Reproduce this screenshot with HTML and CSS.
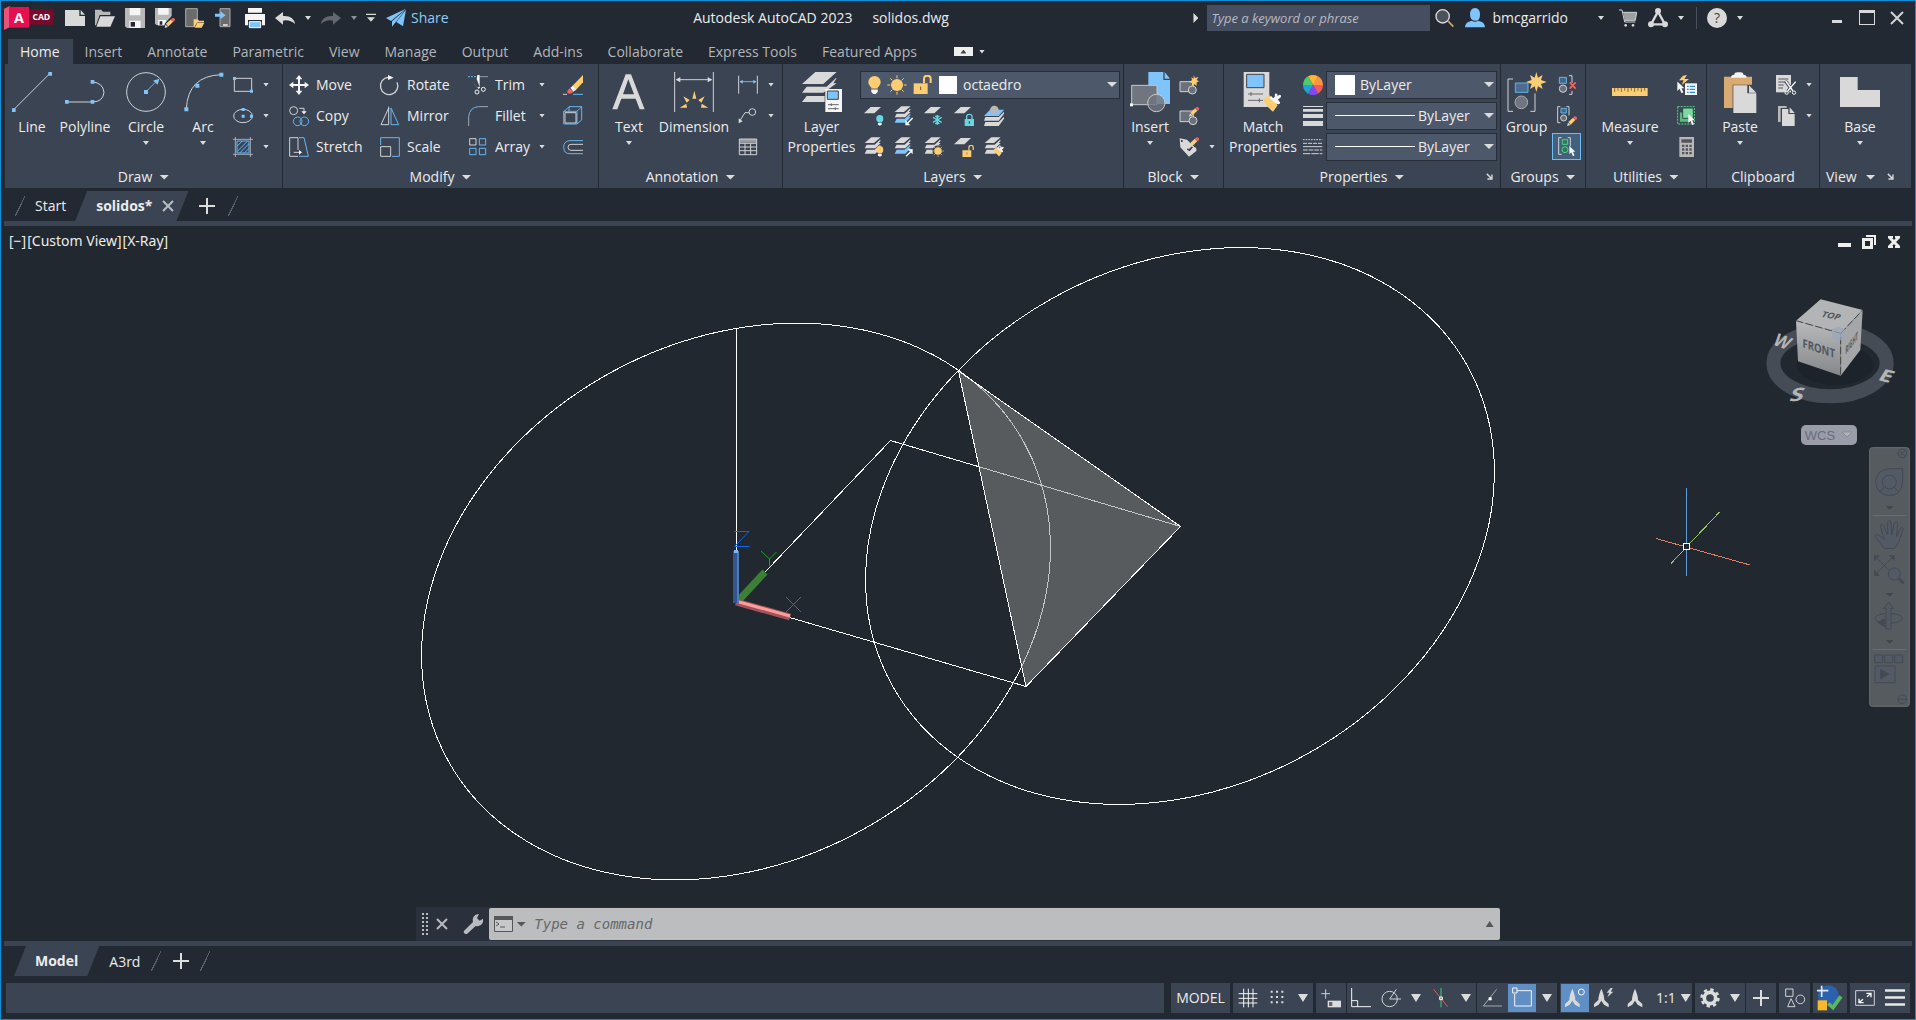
FILE: index.html
```html
<!DOCTYPE html>
<html lang="en">
<head>
<meta charset="utf-8">
<title>Autodesk AutoCAD 2023 - solidos.dwg</title>
<link rel="stylesheet" href="styles.css">
</head>
<body>
<svg class="defs" aria-hidden="true">
  <symbol id="sheet" viewBox="0 0 60 60"><path class="fw" d="M20 3h31L31 22H0z"/></symbol>
  <symbol id="stack" viewBox="0 0 60 60"><path class="fw" d="M22 1h28L30 18H2zM8 23h24l16-15 2 3-6 7h6L34 34H2zM8 38h24l16-14 2 3-6 7h6L34 50H2z"/></symbol>
  <symbol id="stackblue" viewBox="0 0 60 60"><path class="fw" d="M22 1h28L30 18H2zM8 23h24l16-15 2 3-6 7h6L34 34H2z"/><path class="fb" d="M8 38h24l16-14 2 3-6 7h6L34 50H2z"/></symbol>
  <symbol id="bulb" viewBox="0 0 40 60"><circle cx="20" cy="21" r="19"/><path d="M10 32h20v9H10z"/><path class="fW" d="M10 44h20v7l-6 7h-8l-6-7z"/></symbol>
  <symbol id="sun" viewBox="0 0 60 60"><circle class="fy" cx="30" cy="30" r="18"/><path class="sy" d="M30 1v9M30 50v9M1 30h9M50 30h9M10 10l6 6M44 44l6 6M10 50l6-6M44 16l6-6"/></symbol>
  <symbol id="lock" viewBox="0 0 60 60"><path d="M2 25h42v32H2z"/><path stroke="#6b5a35" d="M23 35v10"/><path class="open" d="M33 25V11q0-9 10-9t10 9v13"/></symbol>
  <symbol id="pencil" viewBox="0 0 30 30"><path class="fw" d="M0 30l3-10 7 7z"/><path class="fy" d="M4 18L18 5l7 7-14 14z"/><path class="fr" d="M20 3q4-4 8-1t1 8l-3 2-7-7z"/></symbol>
  <symbol id="brush" viewBox="0 0 60 60"><path class="fy" d="M1 22l18-15 26 31-14 19Q12 44 1 22z"/><path class="fW" d="M22 8l8-6 6 8 6-6q-2-12 4-10t4 8l8-4q8 2 2 10l-8 6 6 8q4 6-4 8l-8-2z" transform="translate(-1 8)scale(.9)"/></symbol>
  <symbol id="cursor" viewBox="0 0 30 40"><path class="fW" d="M1 0v30l7-7 6 14 6-3-6-13h9z"/></symbol>
  <symbol id="peak" viewBox="0 0 60 60"><path class="fw" d="M30 2q9 20 9 34l13 12v10L38 50l-8-12-8 12L8 58V48l13-12q0-14 9-34z"/></symbol>
  <symbol id="launch" viewBox="0 0 20 20"><path class="fw" d="M19 4v15H4v-4h8L1 4l3-3 11 11V4z"/></symbol>
</svg>

<div class="window">
<header class="titlebar">
  <button class="logo" aria-label="Application menu"><svg width="50" height="24" viewBox="0 0 150 72"><path fill="#e8527c" d="M0 8L18 0v63L0 72z"/><path fill="#e5104f" d="M15 3h60v62H15z"/><path fill="#780b2b" d="M75 10h74v46H75z"/><text x="45" y="51" font-size="43" font-weight="700" text-anchor="middle" fill="#fff">A</text><text x="112" y="42" font-size="26" font-weight="700" text-anchor="middle" fill="#fff">CAD</text></svg></button>
  <nav class="quick" aria-label="Quick access">
    <button aria-label="New"><svg class="i" viewBox="0 0 60 60"><path class="fw" d="M0 6h43v18h17v30H0zM47 6l13 14H47z"/></svg></button>
    <button aria-label="Open"><svg class="i" viewBox="0 0 60 60"><path class="fg" d="M0 5h18l6 6h22v10H14L3 52H0z"/><path class="fw" d="M16 25h44L46 56H4z"/></svg></button>
    <button aria-label="Save"><svg class="i" viewBox="0 0 60 60"><path class="fg" d="M0 0h60v60H6l-6-5z"/><path class="fW" d="M14 0h32v22H14zM13 38h34v22H13z"/><path fill="#222933" d="M17 42h13v14H17z"/></svg></button>
    <button aria-label="Save as"><svg class="i" viewBox="0 0 60 60"><path class="fg" d="M0 0h50v52H6l-6-5z"/><path class="fW" d="M9 0h32v20H9zM9 36h24v16H9z"/><path fill="#222933" d="M14 40h8v10h-8zM26 60l4-14 20-22 10 4v18L42 60z"/><use href="#pencil" x="28" y="29" width="32" height="31"/></svg></button>
    <button aria-label="Open from web"><svg class="i" viewBox="0 0 60 60"><path fill="#6b6b6b" stroke="#aaa" d="M2 2h35v54H2z"/><path class="fy" d="M26 34h12l4 4h15v5H36l-8 14h-2zM38 44h20l-8 15H30z"/></svg></button>
    <button aria-label="Save to mobile"><svg class="i" viewBox="0 0 60 60"><path fill="#6b6b6b" stroke="#aaa" d="M15 2h30v54H15z"/><path fill="#fff" d="M24 49h14v4H24z"/><path class="fb" d="M0 17h16V9l16 13-16 12v-8H0z"/></svg></button>
    <button aria-label="Plot"><svg class="i" viewBox="0 0 60 60"><path class="fW" d="M9 0h42v14H9zM0 18h60v34h-9V36H9v16H0z"/><path class="fb" stroke="#fff" d="M13 41h34v18H13z"/></svg></button>
    <button aria-label="Undo"><svg class="i" viewBox="0 0 60 60"><path class="fw" d="M0 30L24 12v12q32-2 36 24-16-14-36-10v12z"/></svg></button>
    <i class="caret"></i>
    <button aria-label="Redo"><svg class="i" viewBox="0 0 60 60"><path fill="#63676d" d="M60 30L36 12v12Q4 22 0 48q16-14 36-10v12z"/></svg></button>
    <i class="caret dim"></i>
    <button class="custom" aria-label="Customize"><svg width="10" height="20" viewBox="0 0 30 60"><path class="fw" d="M0 17h30v4H0zM3 28h24L15 41z"/></svg></button>
    <button class="share"><svg class="i" viewBox="0 0 60 60"><path class="fb" d="M60 2L0 30l15 9zM58 6L18 40v16l9-11zM60 5L31 42l20 13z"/></svg>Share</button>
  </nav>
  <h1 class="doc"><span>Autodesk AutoCAD 2023</span><span>solidos.dwg</span></h1>
  <i class="caret side"></i>
  <input class="search" type="search" placeholder="Type a keyword or phrase" aria-label="Search">
  <nav class="account" aria-label="Account">
    <button aria-label="Search"><svg class="i" viewBox="0 0 60 60"><path stroke="#d0a468" stroke-width="5" d="M40 40l15 16"/><circle cx="23" cy="25" r="20" fill="#4c515a" stroke="#ddd" stroke-width="4"/></svg></button>
    <button class="user"><svg class="i" viewBox="0 0 60 60"><path class="fb" d="M15 20q0-20 15-20t15 20-15 18-15-18zM0 58q0-16 20-20 10 6 20 0 20 4 20 20z"/></svg>bmcgarrido</button>
    <i class="caret"></i>
    <button class="cart" aria-label="App store"><svg class="i" viewBox="0 0 60 60"><path fill="#9c9fa3" d="M16 13h40l-4 24H20z"/><path class="sw" d="M3 6h9l8 36h32M15 13h41l-4 24H20"/><circle class="fw" cx="23" cy="52" r="4"/><circle class="fw" cx="45" cy="52" r="4"/></svg></button>
    <button aria-label="Autodesk App"><svg class="i" viewBox="0 0 60 60"><path stroke="#d9d9d9" stroke-width="7" fill="none" d="M30 11L9 49h42z"/><g class="fw"><circle cx="30" cy="9" r="9"/><circle cx="9" cy="49" r="9"/><circle cx="51" cy="49" r="9"/></g></svg></button>
    <i class="caret"></i>
    <span class="rule"></span>
    <button aria-label="Help"><svg class="i" viewBox="0 0 60 60"><circle class="fw" cx="30" cy="30" r="30"/><text x="30" y="45" font-size="42" text-anchor="middle" fill="#444">?</text></svg></button>
    <i class="caret"></i>
  </nav>
  <nav class="winbtns" aria-label="Window">
    <button aria-label="Minimize"><svg width="16" height="16"><path class="fw" d="M3 10h10v3H3z"/></svg></button>
    <button aria-label="Maximize"><svg width="16" height="16"><path class="fw" fill-rule="evenodd" d="M0 0h16v15H0zM1 3v11h14V3z"/></svg></button>
    <button aria-label="Close"><svg width="16" height="16"><path class="sw" stroke-width="2" d="M2 2l12 12M14 2L2 14"/></svg></button>
  </nav>
</header>

<nav class="tabs" aria-label="Ribbon tabs">
  <a href="#home" class="on">Home</a><a href="#insert">Insert</a><a href="#annotate">Annotate</a><a href="#parametric">Parametric</a><a href="#view">View</a><a href="#manage">Manage</a><a href="#output">Output</a><a href="#addins">Add-ins</a><a href="#collaborate">Collaborate</a><a href="#express">Express Tools</a><a href="#apps">Featured Apps</a>
  <button class="collapse" aria-label="Minimize ribbon"><i></i></button><i class="caret"></i>
</nav>

<main class="ribbon" id="home">
  <section class="panel draw">
    <div class="body">
      <button class="big"><svg class="I" viewBox="0 0 120 120"><path class="sw" d="M4 114L114 4"/><path class="fb" d="M0 109h11v11H0zM109 0h11v11h-11z"/></svg>Line</button>
      <button class="big"><svg class="I" viewBox="0 0 120 120"><path class="sw" d="M5 90h77q32 0 35-29-3-29-35-31"/><path class="fb" d="M0 84h11v11H0zM77 84h11v11H77zM77 24h11v11H77z"/></svg>Polyline</button>
      <button class="big"><svg class="I" viewBox="0 0 120 120"><circle class="sw" cx="60" cy="60" r="58"/><path class="sb" d="M60 59l28-28"/><path class="fb" d="M54 54h12v12H54zM100 20l-5 18-14-12z"/></svg>Circle<i class="caret"></i></button>
      <button class="big"><svg class="I" viewBox="0 0 120 120"><path class="sw" d="M10 112Q14 12 114 8"/><path class="fb" d="M4 106h12v12H4zM37 35h12v12H37zM109 2h12v12h-12z"/></svg>Arc<i class="caret"></i></button>
      <div class="smalls">
        <button aria-label="Rectangle"><svg class="i" viewBox="0 0 60 60"><path class="sw" d="M4 10h52v39H4z"/><path class="fb" d="M0 6h9v9H0zM51 44h9v9h-9z"/></svg><i class="caret"></i></button>
        <button aria-label="Ellipse"><svg class="i" viewBox="0 0 60 60"><ellipse class="sw" cx="30" cy="30" rx="28" ry="20"/><path class="fb" d="M26 6h9v9h-9zM26 26h9v9h-9zM51 26h9v9h-9z"/></svg><i class="caret"></i></button>
        <button aria-label="Hatch"><svg class="i" viewBox="0 0 60 60"><path class="sw" opacity=".7" d="M7 0v60M52 0v60M0 7h60M0 52h60"/><path class="sb" d="M12 12h36v36H12zM12 28l16-16M12 44l32-32M20 48l28-28M34 48l14-14"/></svg><i class="caret"></i></button>
      </div>
    </div>
    <h2>Draw<i class="caret l"></i></h2>
  </section>

  <section class="panel modify">
    <div class="body">
      <div class="smalls">
        <button><svg class="i" viewBox="0 0 60 60"><path class="fW" d="M30 0l10 13h-7v14h14v-7l13 10-13 10v-7H33v14h7L30 60 20 47h7V33H13v7L0 30l13-10v7h14V13h-7z"/></svg>Move</button>
        <button><svg class="i" viewBox="0 0 60 60"><circle class="sw" cx="14" cy="14" r="12"/><path class="sw" d="M31 7h14v12"/><path class="fW" d="M37 16h16l-8 9z"/><circle class="sb" cx="26" cy="46" r="13"/><circle class="sb" cx="46" cy="46" r="13"/></svg>Copy</button>
        <button><svg class="i" viewBox="0 0 60 60"><path class="sw" d="M27 58H2V2h25v37M14 46h20"/><path class="fW" d="M30 39l9 7-9 7z"/><path class="sb" d="M30 2h15l13 56H30"/></svg>Stretch</button>
      </div>
      <div class="smalls">
        <button><svg class="i" viewBox="0 0 60 60"><path class="sw" d="M24 7A26 26 0 1 0 51 22" stroke-width="4"/><path class="fW" d="M24 0v15l17-7z"/></svg>Rotate</button>
        <button><svg class="i" viewBox="0 0 60 60"><path class="sw" d="M26 6v50H3zM26 2v8"/><path class="sb" d="M33 6v50h23z"/></svg>Mirror</button>
        <button><svg class="i" viewBox="0 0 60 60"><path class="sb" d="M2 24V2h56v56H36"/><path class="sw" d="M2 29h30v29H2z"/></svg>Scale</button>
      </div>
      <div class="smalls">
        <button class="wide"><svg class="i" viewBox="0 0 60 60"><path class="sb" stroke-dasharray="6 3" d="M0 5h28"/><path class="sw" opacity=".6" d="M36 5h24"/><path class="fW" d="M5 12l27 30 4-4L26 12 28 0h7v34l-7 4z"/><circle class="sW" cx="27" cy="51" r="6"/><circle class="sW" cx="46" cy="43" r="6"/></svg>Trim<i class="caret"></i></button>
        <button class="wide"><svg class="i" viewBox="0 0 60 60"><path class="sb" d="M32 2Q5 3 2 32"/><path class="sw" opacity=".7" d="M33 2h27M2 32v28"/></svg>Fillet<i class="caret"></i></button>
        <button class="wide"><svg class="i" viewBox="0 0 60 60"><path class="sw" d="M5 5h19v19H5z"/><path class="sb" d="M34 5h19v19H34zM34 34h19v19H34zM5 34h19v19H5z"/></svg>Array<i class="caret"></i></button>
      </div>
      <div class="smalls">
        <button aria-label="Erase"><svg class="i" viewBox="0 0 60 60"><path class="sw" d="M0 58h12"/><path class="sb" d="M30 58h30"/><path class="fy" d="M28 33L60 0v22L38 46z"/><path class="fW" d="M22 38l8-6 9 12-8 6z"/><path class="fr" d="M20 40l11 11q-9 8-16 4t5-15z"/></svg></button>
        <button aria-label="Explode"><svg class="i" viewBox="0 0 60 60"><path class="sb" d="M2 18L18 2h38v40L42 54M18 2v14M56 2L42 16M2 16h40v38H2z"/><path class="sw" d="M6 20h33v31H6z"/></svg></button>
        <button aria-label="Offset"><svg class="i" viewBox="0 0 60 60"><path class="sb" d="M60 11H21Q2 12 2 31t19 19h39"/><path class="sw" d="M60 22H24q-9 0-9 9t9 9h36"/></svg></button>
      </div>
    </div>
    <h2>Modify<i class="caret l"></i></h2>
  </section>

  <section class="panel annotation">
    <div class="body">
      <button class="big"><svg class="I" viewBox="0 0 120 120"><path class="fw" fill-rule="evenodd" d="M10 112L50 7h16l41 105H92L80 80H37l-12 32zM42 67h33L58 22z"/></svg>Text<i class="caret"></i></button>
      <button class="big"><svg class="I" viewBox="0 0 120 120"><path class="sw" d="M2 0v120M118 0v120M8 23h104"/><path class="fw" d="M5 23l14-8v16zM115 23l-14-8v16z"/><path class="fy" d="M55 80l6-24 6 24zM28 73l19 11-9 8zM92 73L73 84l9 8zM17 107l20-12 2 12zM103 107L83 95l-2 12z"/></svg>Dimension</button>
      <div class="smalls">
        <button aria-label="Linear"><svg class="i" viewBox="0 0 60 60"><path class="sw" d="M2 2v54M58 2v54"/><path class="sb" d="M6 20h48"/><path class="fb" d="M5 20l9-6v12zM55 20l-9-6v12z"/></svg><i class="caret"></i></button>
        <button aria-label="Leader"><svg class="i" viewBox="0 0 60 60"><circle class="sw" cx="43" cy="18" r="10"/><path class="sw" d="M33 20H21L7 42"/><path class="fw" d="M2 52V37l12 9z"/></svg><i class="caret"></i></button>
        <button aria-label="Table"><svg class="i" viewBox="0 0 60 60"><path class="fw" opacity=".6" d="M4 6h52v11H4z"/><path class="sw" d="M4 6h52v47H4zM4 19h52M4 30h52M4 41h52M21 19v34M38 19v34"/></svg></button>
      </div>
    </div>
    <h2>Annotation<i class="caret l"></i></h2>
  </section>

  <section class="panel layers">
    <div class="body">
      <button class="big"><svg class="I" viewBox="0 0 120 120"><path class="fw" d="M40 0h64L64 36H0zM14 44h60l28-26h2L94 34h10L64 62H0zM14 72h54V90H0z"/><path class="fW" d="M70 51h50v69H70z"/><path class="fb" stroke="#444" d="M76 57h33v25H76z"/><path stroke="#666" d="M78 98h32M78 110h32M88 94v8M100 106v8"/></svg>Layer<br>Properties</button>
      <div class="stackcol">
        <label class="field"><svg class="fy" width="13" height="20" viewBox="0 0 40 60"><use href="#bulb"/></svg><svg class="i" viewBox="0 0 60 60"><use href="#sun"/></svg><svg class="i fy lockopen" viewBox="0 0 60 60"><use href="#lock"/></svg><span class="swatch"></span><select aria-label="Layer"><option>octaedro</option></select><i class="caret l"></i></label>
        <div class="iconrow">
          <button aria-label="Off"><svg class="i" viewBox="0 0 60 60"><use href="#sheet"/><svg class="ft" x="34" y="26" width="27" height="34" viewBox="0 0 40 60"><use href="#bulb"/></svg></svg></button>
          <button aria-label="Isolate"><svg class="i" viewBox="0 0 60 60"><use href="#stackblue"/><path stroke="#fff" stroke-width="4" d="M56 36L42 50"/><path class="fW" d="M34 58V42l15 16z"/></svg></button>
          <button aria-label="Freeze"><svg class="i" viewBox="0 0 60 60"><use href="#sheet"/><path stroke="#67d6e0" stroke-width="4" d="M40 27v29M27 34l26 15M27 49l26-15M34 29l6 6 6-6M34 54l6-6 6 6"/></svg></button>
          <button aria-label="Lock"><svg class="i" viewBox="0 0 60 60"><use href="#sheet"/><path class="ft" d="M32 39h28v21H32z"/><path stroke="#67d6e0" stroke-width="4" d="M38 39v-8q0-6 8-6t8 6v8"/><path stroke="#333" d="M46 46v7"/></svg></button>
          <button aria-label="Make current"><svg class="i" viewBox="0 0 60 60"><path class="fb" d="M18 11h42L44 30H0z"/><circle class="fg" cx="31" cy="12" r="13"/><path class="fw" d="M4 33h40l16-16v6L44 44H0zM4 48h40l16-16v6L44 60H0z"/></svg></button>
        </div>
        <div class="iconrow">
          <button aria-label="On"><svg class="i" viewBox="0 0 60 60"><use href="#stack"/><svg class="fy" x="34" y="26" width="27" height="34" viewBox="0 0 40 60"><use href="#bulb"/></svg></svg></button>
          <button aria-label="Unisolate"><svg class="i" viewBox="0 0 60 60"><use href="#stackblue"/><path stroke="#fff" stroke-width="4" d="M36 58l14-14"/><path class="fW" d="M56 36v16L41 37z"/></svg></button>
          <button aria-label="Thaw"><svg class="i" viewBox="0 0 60 60"><use href="#stack"/><circle cx="42" cy="42" r="17" fill="#3b4453"/><use href="#sun" x="23" y="23" width="38" height="38"/></svg></button>
          <button aria-label="Unlock"><svg class="i" viewBox="0 0 60 60"><use href="#sheet"/><svg class="fy lockopen" x="24" y="24" width="38" height="38" viewBox="0 0 60 60"><use href="#lock"/></svg></svg></button>
          <button aria-label="Match layer"><svg class="i" viewBox="0 0 60 60"><use href="#stack"/><use href="#brush" x="28" y="26" width="34" height="34"/></svg></button>
        </div>
      </div>
    </div>
    <h2>Layers<i class="caret l"></i></h2>
  </section>

  <section class="panel block">
    <div class="body">
      <button class="big"><svg class="I" viewBox="0 0 120 120"><path class="fb" d="M55 0h45v24h20v72H55zM104 0l16 20h-16z"/><path fill="#70767f" stroke="#c8c8c8" d="M5 40h76v58H5z"/><path class="fW" d="M0 94h9v9H0z"/><circle cx="79" cy="93" r="26" fill="#70767fcc" stroke="#c8c8c8"/></svg>Insert<i class="caret"></i></button>
      <div class="smalls">
        <button aria-label="Create"><svg class="i" viewBox="0 0 60 60"><path class="fg2 sw" d="M3 20h40v30H3z"/><circle class="fg2 sw" cx="40" cy="45" r="12"/><path class="fy" d="M44 0l4 9 10-3-5 9 7 4-8 4 2 9-8-4-7 5v-9l-9-4 9-4-2-9 7 4z"/></svg></button>
        <button aria-label="Edit"><svg class="i" viewBox="0 0 60 60"><path class="fg2 sw" d="M3 15h40v32H3z"/><circle class="fg2 sw" cx="42" cy="44" r="12"/><use href="#pencil" x="30" y="2" width="30" height="30"/></svg></button>
        <button aria-label="Edit attributes"><svg class="i" viewBox="0 0 60 60"><path class="fw" d="M2 4l22 4 22 22q8 2 6 12L30 59 4 31z"/><path fill="#3b4453" d="M6 9h5v6H6zM26 34l4 2 8-8 4 3-10 12-8-5z"/><use href="#pencil" x="28" y="0" width="32" height="32"/></svg><i class="caret"></i></button>
      </div>
    </div>
    <h2>Block<i class="caret l"></i></h2>
  </section>

  <section class="panel props">
    <div class="body">
      <button class="big"><svg class="I" viewBox="0 0 120 120"><path class="fw" d="M2 0h77v105H2z"/><path class="fb" stroke="#444" d="M11 7h52v40H11z"/><path stroke="#666" d="M15 66h45M15 85h45M24 60v12M49 79v12"/><use href="#brush" x="58" y="62" width="62" height="60"/></svg>Match<br>Properties</button>
      <div class="smalls">
        <button aria-label="Color"><svg class="i" viewBox="-30 -30 60 60"><path fill="#ff6b4a" d="M0 0V-30H0L26-15z"/><path fill="#fcb731" d="M0 0L-15-26Q0-34 15-26z"/><path fill="#ff9340" d="M0 0L15-26Q29-18 30 0z"/><path fill="#f25c5c" d="M0 0H30Q29 18 15 26z"/><path fill="#8347f5" d="M0 0L15 26Q0 34-15 26z"/><path fill="#1fa4d8" d="M0 0L-15 26Q-29 18-30 0z"/><path fill="#4ecb71" d="M0 0H-30Q-29-18-15-26z"/></svg></button>
        <button aria-label="Lineweight"><svg class="i" viewBox="0 0 60 60"><path class="fw" d="M0 0h60v3H0zM0 9h60v8H0zM0 24h60v12H0zM0 45h60v15H0z"/></svg></button>
        <button aria-label="Linetype"><svg class="i" viewBox="0 0 60 60"><g class="sw"><path stroke-dasharray="5 3" d="M0 8h58"/><path stroke-dasharray="12 3" d="M0 19h58"/><path d="M0 29h58"/><path stroke-dasharray="14 3" d="M0 39h58"/><path stroke-dasharray="22 3" d="M0 50h58"/></g></svg></button>
      </div>
      <div class="stackcol">
        <label class="field color"><span class="swatch"></span><select aria-label="Object color"><option>ByLayer</option></select><i class="caret l"></i></label>
        <label class="field"><span class="line"></span><select aria-label="Lineweight"><option>ByLayer</option></select><i class="caret l"></i></label>
        <label class="field"><span class="line"></span><select aria-label="Linetype"><option>ByLayer</option></select><i class="caret l"></i></label>
      </div>
    </div>
    <h2>Properties<i class="caret l"></i><svg class="launcher" width="7" height="7"><use href="#launch"/></svg></h2>
  </section>

  <section class="panel groups">
    <div class="body">
      <button class="big"><svg class="I" viewBox="0 0 120 120"><path class="sw" d="M18 21H3v97h15M70 118h14V64"/><path fill="#4c6d92" stroke="#62b0ea" d="M25 33h38v28H25z"/><circle cx="43" cy="91" r="19" fill="#70767f" stroke="#aaa"/><path class="fy" d="M88 0l5 17 14-8-5 15 17 6-17 6 5 15-14-8-5 17-5-17-14 8 5-15-17-6 17-6-5-15 14 8z"/></svg>Group</button>
      <div class="smalls">
        <button aria-label="Ungroup"><svg class="i" viewBox="0 0 60 60"><path class="sb fbd" d="M7 7h21v18H7z"/><circle class="fg2 sw" cx="18" cy="41" r="11"/><path class="sw" d="M36 2h9v22M45 48v10h-9"/><path stroke="#f26363" stroke-width="5" d="M38 22l18 19M56 22L38 41"/></svg></button>
        <button aria-label="Group edit"><svg class="i" viewBox="0 0 60 60"><path class="sw" d="M10 2H2v48h8M28 2h8v26"/><path class="sb fbd" d="M12 7h16v14H12z"/><circle class="fg2 sw" cx="20" cy="36" r="9"/><use href="#pencil" x="30" y="30" width="30" height="30"/></svg></button>
        <button class="active" aria-label="Group selection"><svg class="i" viewBox="0 0 60 60"><path class="sw" d="M14 2H5v50h9M32 2h8v26"/><path fill="#2f7a56" stroke="#52d087" d="M16 8h16v14H16z"/><circle cx="24" cy="38" r="9" fill="#2f7a56" stroke="#52d087"/><use href="#cursor" x="36" y="27" width="25" height="33"/></svg></button>
      </div>
    </div>
    <h2>Groups<i class="caret l"></i></h2>
  </section>

  <section class="panel utils">
    <div class="body">
      <button class="big"><svg class="I" viewBox="0 0 120 120"><path class="fy" d="M6 48h107v24H6z"/><path stroke="#8a6b32" d="M14 48v12M24 48v8M34 48v12M44 48v8M54 48v12M64 48v8M74 48v12M84 48v8M94 48v12M104 48v8"/></svg>Measure<i class="caret"></i></button>
      <div class="smalls">
        <button aria-label="Quick select"><svg class="i" viewBox="0 0 60 60"><path class="fy" d="M18 2L6 16h14l-6 14 22-18H22l8-12z"/><path class="fW" d="M24 25h36v35H24z"/><path stroke="#2b8fdc" stroke-width="4" d="M30 34h5M38 34h16M30 43h5M38 43h16M30 52h5M38 52h16"/><use href="#cursor" x="0" y="17" width="29" height="43"/></svg></button>
        <button aria-label="Select all"><svg class="i" viewBox="0 0 60 60"><path stroke="#59cf8d" stroke-dasharray="6 3" d="M2 2h50v52H2z"/><path fill="#57bd81" stroke="#2e4a47" d="M7 18h32v31H7z"/><path fill="#7bd9a2" stroke="#2e4a47" d="M17 6h32v31H17z"/><use href="#cursor" x="33" y="24" width="27" height="36"/></svg></button>
        <button aria-label="Calculator"><svg class="i" viewBox="0 0 60 60"><path class="fg" d="M7 0h44v60H7z"/><path fill="#555" d="M13 7h32v10H13zM15 23h7v7h-7zM26 23h7v7h-7zM37 23h7v7h-7zM15 34h7v7h-7zM26 34h7v7h-7zM37 34h7v7h-7zM15 45h7v7h-7zM26 45h7v7h-7zM37 45h7v7h-7z"/></svg></button>
      </div>
    </div>
    <h2>Utilities<i class="caret l"></i></h2>
  </section>

  <section class="panel clip">
    <div class="body">
      <button class="big"><svg class="I" viewBox="0 0 120 120"><path fill="#d9ab73" d="M12 14h84v24H38v70H12z"/><path class="fW" d="M33 17q0-9 10-9 0-7 10-7h8q9 0 9 7 10 0 10 9z"/><path class="fw" d="M40 40h42v24h27v59H40zM87 40l22 22H87z"/></svg>Paste<i class="caret"></i></button>
      <div class="smalls">
        <button aria-label="Cut"><svg class="i" viewBox="0 0 60 60"><path class="fw" d="M0 0h45v52H0z"/><path stroke="#555" d="M7 12h30M7 21h30M7 30h16M7 39h14"/><path stroke="#3b4453" stroke-width="9" d="M28 18l24 32M58 18L34 50"/><path stroke="#fff" stroke-width="4" d="M29 18l22 30M59 20L35 48"/><circle class="sW" cx="32" cy="53" r="5"/><circle class="sW" cx="54" cy="53" r="5"/></svg><i class="caret"></i></button>
        <button aria-label="Copy clip"><svg class="i" viewBox="0 0 60 60"><path class="fg" d="M6 0h26v6H14v42H6z"/><path class="fw" d="M18 9h19v15h19v36H18zM41 4l15 17H41z"/></svg><i class="caret"></i></button>
      </div>
    </div>
    <h2>Clipboard</h2>
  </section>

  <section class="panel viewp">
    <div class="body">
      <button class="big"><svg class="I" viewBox="0 0 120 120"><path class="fw" d="M0 15h53v39h67v51H0z"/></svg>Base<i class="caret"></i></button>
    </div>
    <h2>View<i class="caret l"></i><svg class="launcher" width="7" height="7"><use href="#launch"/></svg></h2>
  </section>
</main>

<nav class="filetabs" aria-label="Files">
  <span class="slash"></span><a href="#start" class="ft-start">Start</a>
  <a href="#solidos" class="slant file">solidos*<svg width="12" height="12"><path stroke="#b9bcc2" stroke-width="2" d="M1 1l10 10M11 1L1 11"/></svg></a>
  <button class="plus" aria-label="New drawing"></button><span class="slash"></span>
</nav>

<section class="viewport" aria-label="Drawing area">
  <svg class="drawing" viewBox="1 226 1914 715" preserveAspectRatio="xMidYMid meet">
    <g stroke="#fff" stroke-width="1" fill="none" shape-rendering="crispEdges">
      <ellipse rx="329" ry="261" transform="translate(736 601.5)rotate(-28.9)"/>
      <ellipse rx="329" ry="261" transform="translate(1180 526)rotate(-28.9)"/>
      <path d="M736.5 602V328.500M736.5 602L890.500 440.500 1180.500 526.500M736.5 602L1026 686.500"/>
      <path d="M958.500 371L1180.500 526.500 1026 686.500z" fill="#8d8e8b" fill-opacity=".5"/>
    </g>
    <g fill="none" stroke-linecap="butt">
      <path stroke="#3c8038" stroke-width="7" d="M739 600L765 572"/>
      <path stroke="#a35257" stroke-width="7" d="M736 602L790 617"/><path stroke="#fb9d9d" stroke-width="3" d="M739 602L790 616"/>
      <path stroke="#34578b" stroke-width="6" d="M736 603V551"/><path stroke="#4f7dbb" stroke-width="2" d="M738 603V551"/><path stroke="#7db6fa" stroke-width="4" d="M736 553v-3"/>
      <path stroke="#0b65f2" d="M734 531.500h15L734.500 546.500h15"/>
      <path stroke="#17a617" d="M761 551l8.500 8 7-7M769.500 559v7"/>
      <path stroke="#e32f2f" d="M786 597l15 15M801 597l-15 15"/>
    </g>
    <g fill="none" shape-rendering="crispEdges">
      <path stroke="#5b9ddc" stroke-width="1" d="M1686.500 488v88"/>
      <path stroke="#98c462" d="M1671 563.500L1719.500 512"/>
      <path stroke="#dd7f62" d="M1656 538.500L1750 565"/>
      <path stroke="#fff" fill="#222830" d="M1683.500 543.500h6v6h-6z"/>
    </g>
  </svg>
  <button class="vplabel"><span>[−]</span><span>[Custom View]</span><span>[X-Ray]</span></button>
  <div class="vpbtns">
    <button aria-label="Minimize viewport"><svg width="16" height="16"><path fill="#eee" d="M2 9h13v4H2z"/></svg></button>
    <button aria-label="Restore viewport"><svg width="16" height="16"><path fill="#eee" fill-rule="evenodd" d="M5 1h10v10h-2V3H5zM1 4h11v11H1zM4 7v5h5V7z"/></svg></button>
    <button aria-label="Close viewport"><svg width="16" height="16"><path stroke="#eee" stroke-width="3" d="M3 3l10 10M13 3L3 13"/><path fill="#eee" d="M2 2h5v2H2zM9 2h5v2H9zM2 12h5v2H2zM9 12h5v2H9z"/></svg></button>
  </div>
  <svg class="cube" width="132" height="110" viewBox="72 48 396 330">
    <defs><linearGradient id="front" x2="0" y2="1"><stop stop-color="#b8babc"/><stop offset="1" stop-color="#858789"/></linearGradient></defs>
    <ellipse cx="270" cy="250" rx="170" ry="99" fill="none" stroke="#454c55" stroke-width="42"/>
    <ellipse cx="285" cy="255" rx="115" ry="60" fill="#1b2027" opacity=".6"/>
    <path fill="#b2b4b6" d="M168 122L242 58l126 32-66 70z"/>
    <path fill="url(#front)" d="M168 122l134 38v127l-128-43z"/>
    <path fill="#a4a6a8" d="M302 160l66-70-7 120-59 77z"/>
    <path stroke="#444" stroke-dasharray="22 8" d="M168 122l134 38v127M302 160l66-70"/>
    <path fill="#9aa7b8" opacity=".7" d="M276 148l18-8 20 6v30l-18 8-20-8z"/>
    <g font-weight="700" text-anchor="middle" fill="#51565c">
      <text font-size="28" transform="matrix(.97 .2 -.5 .8 269 115)">TOP</text>
      <text font-size="36" transform="matrix(.8 .26 0 1 236 218)">FRONT</text>
      <text font-size="32" transform="matrix(.38 -.48 0 1 335 200)">RIGHT</text>
    </g>
    <g font-weight="700" text-anchor="middle" fill="#b5b5b5" font-size="58">
      <text transform="matrix(.8 .3 -.5 .8 118 201)">W</text><text transform="matrix(1.300 -.1 -.3 .95 166 363)">S</text><text transform="matrix(1.200 .3 -.5 .8 430 304)">E</text>
    </g>
  </svg>
  <button class="wcs">WCS<svg width="12" height="8"><path fill="#b0b2bd" stroke="#8c8c97" stroke-width="1" d="M1 1h10L6 6z"/></svg></button>
  <svg class="navbar" width="41" height="260" viewBox="386 500 123 780" fill="none" stroke="#444a53" stroke-width="4">
    <rect x="388" y="502" width="119" height="776" rx="8" fill="#565b5f" stroke="#6a6f73"/>
    <circle cx="486" cy="519" r="13"/><path d="M479 512l14 14M493 512l-14 14"/>
    <path fill="#525a66" d="M447 565h40v40q-3 40-40 41-38-3-41-41 3-38 41-40z"/><circle cx="447" cy="605" r="21"/><path d="M432 621l-14 14M462 621l14 14"/>
    <path stroke="#6a7074" stroke-width="3" d="M397 706h100M397 1108h100"/>
    <path stroke="none" fill="#3f454d" d="M437 677h22l-11 11zM437 938h22l-11 11zM437 1079h22l-11 11z"/>
    <path fill="#525a66" d="M432 804l-28-36q2-10 14-2l14 12-12-40q2-12 10-2l12 28V724q4-8 10 0l2 40 8-36q6-8 10 2l-4 40 12-26q8-6 8 4l-14 40-12 16z"/>
    <path d="M404 828l56 55M460 828l-56 55"/><path stroke="none" fill="#444a53" d="M401 825h18l-18 18zM463 825v18l-18-18zM401 886v-18l18 18z"/>
    <circle cx="462" cy="881" r="18" fill="#525a66"/><path stroke-width="9" d="M475 895l15 14"/>
    <ellipse cx="445" cy="1014" rx="41" ry="15"/><path fill="#525a66" d="M437 1046V984h-8l16-18 14 18h-7v62z"/><path fill="#444a53" d="M413 1027l20-12v24z"/>
    <path fill="#525a66" d="M403 1124h24v23h-24zM433 1124h24v23h-24zM463 1124h24v23h-24zM404 1157h60v50h-60z"/><path fill="#444a53" d="M421 1168l24 13-24 14z"/>
    <circle cx="486" cy="1257" r="13"/><path d="M475 1257h22"/>
  </svg>
  <form class="cmd">
    <svg width="6" height="22"><path stroke="#b9bbc0" stroke-width="2" stroke-dasharray="2 2" d="M1 0v22M5 0v22"/></svg>
    <button type="button" aria-label="Close command line"><svg width="12" height="12"><path stroke="#b9bbc0" stroke-width="2" d="M1 1l10 10M11 1L1 11"/></svg></button>
    <button type="button" aria-label="Customize command line"><svg class="i" viewBox="0 0 60 60"><path fill="#b9bbc0" d="M2 52l28-28q-4-14 8-22l10-2-6 12 8 8 10-6q2 14-8 20-8 4-14 2L12 60Q2 62 2 52z"/></svg></button>
    <label class="entry"><svg width="20" height="16"><path stroke="#55575a" fill="#c6c8c9" stroke-width="1" d="M.5.5h18v15H.5z"/><path fill="#55575a" d="M0 0h19v4H0z"/><path stroke="#55575a" stroke-width="1" d="M2 6l3 2-3 2M6 11h5"/></svg><i class="caret l"></i><input type="text" placeholder="Type a command" aria-label="Command"><i class="caret up"></i></label>
  </form>
</section>

<nav class="layouts" aria-label="Layouts">
  <a href="#model" class="slant model">Model</a><a href="#a3rd">A3rd</a><span class="slash"></span><button class="plus" aria-label="New layout"></button><span class="slash"></span>
</nav>

<footer class="status">
  <div class="fill"></div>
  <div class="cell w59"><button class="mode">MODEL</button></div>
  <div class="cell w80"><button aria-label="Grid"><svg class="i" viewBox="0 0 60 60"><path class="sW" d="M17 2v56M31 2v56M45 2v56M2 17h56M2 31h56M2 45h56"/></svg></button><button aria-label="Snap"><svg class="i" viewBox="0 0 60 60"><path stroke="#ddd" stroke-width="6" stroke-dasharray="6 10" d="M8 11h40M8 27h40M8 43h40"/></svg></button><i class="caret m"></i></div>
  <div class="cell w30"><button aria-label="Dynamic input"><svg class="i" viewBox="0 0 60 60"><path class="sw" d="M14 4v28M1 17h26"/><path fill="#ddd" d="M20 38h40v20H20z"/><path fill="#666" d="M24 42h10v12H24z"/></svg></button></div>
  <div class="cell w130"><button aria-label="Ortho"><svg class="i" viewBox="0 0 60 60"><path class="sW" d="M2 0v56h58M2 38h18v18"/></svg></button><button aria-label="Polar"><svg class="i" viewBox="0 0 60 60"><circle class="sw" cx="26" cy="33" r="23"/><path class="sw" d="M26 33h34M26 33L46 4"/></svg></button><i class="caret m"></i><button aria-label="Isodraft"><svg class="i" viewBox="0 0 60 60"><path stroke="#4bc47d" d="M30 0v58"/><path stroke="#d85c63" d="M8 4l42 52"/><path stroke="#fff" d="M26 27h8v8h-8z"/></svg></button><i class="caret m"></i></div>
  <div class="cell w80 tight"><button aria-label="Tracking"><svg class="i" viewBox="0 0 60 60"><path class="sw" opacity=".7" d="M44 4L4 54h56"/><path fill="#fff" d="M20 28h9v9h-9z"/></svg></button><button class="lit" aria-label="Object snap"><svg class="i" viewBox="0 0 60 60"><path class="sW" d="M14 8h44v46H8V18M2 0h13v15H2z"/></svg></button><i class="caret m"></i></div>
  <div class="cell w132"><button class="lit" aria-label="Annotation visibility"><svg class="i" viewBox="0 0 60 60"><use href="#peak" x="-8" width="60" height="60"/><circle class="sW" cx="49" cy="12" r="9"/></svg></button><button aria-label="Auto scale"><svg class="i" viewBox="0 0 60 60"><use href="#peak" x="-8" width="60" height="60"/><path class="fw" d="M50 0L38 14h8l-6 14 18-17h-8l6-11z"/></svg></button><button class="spaced" aria-label="Annotation scale"><svg class="i" viewBox="0 0 60 60"><use href="#peak"/></svg></button><button class="mode spaced">1:1</button><i class="caret m"></i></div>
  <div class="cell w50"><button aria-label="Workspace"><svg class="i" viewBox="-30 -30 60 60"><circle r="17" stroke="#ddd" stroke-width="11"/><circle r="25" stroke="#ddd" stroke-width="8" stroke-dasharray="10 9.630"/></svg></button><i class="caret m"></i></div>
  <div class="cell w30 joined"><button class="plus" aria-label="Annotation monitor"></button></div>
  <div class="cell w31"><button aria-label="Isolate objects"><svg class="i" viewBox="0 0 60 60"><path class="sw" d="M2 3h22v22H2zM8 56l10-24 12 24z"/><circle class="sw" cx="46" cy="34" r="13"/></svg></button></div>
  <div class="cell w34"><button aria-label="Graphics performance"><svg width="26" height="26" viewBox="0 0 78 78"><circle cx="34" cy="32" r="31" fill="#2b62ad"/><path fill="#f6b82c" d="M2 46h28v30H2z"/><path stroke="#dfe9f7" stroke-width="5" d="M14 2v34M0 17h34"/><path stroke="#5cb85c" stroke-width="11" d="M34 56l14 12 24-34"/></svg></button></div>
  <div class="cell w60"><button aria-label="Clean screen"><svg class="i" viewBox="0 0 60 60"><path class="sw" d="M2 8h56v44H2z"/><path stroke="#fff" stroke-width="4" d="M34 16h14v12M48 16L36 26M12 32v12h14M12 44l12-10"/></svg></button><button aria-label="Customization"><svg class="i" viewBox="0 0 60 60"><path fill="#e8e8e8" d="M0 4h60v7H0zM0 25h60v7H0zM0 46h60v7H0z"/></svg></button></div>
</footer>
</div>
</body>
</html>
```
FILE: styles.css
```css
* { box-sizing: border-box; }
body {
  margin: 0;
  background: #222933;
  color: #ececec;
  font: 14px/20px "Open Sans", "Noto Sans", sans-serif;
}
button, select, input { font: inherit; color: inherit; }
button {
  display: flex;
  align-items: center;
  justify-content: center;
  padding: 0;
  border: 0;
  background: none;
}
a { color: inherit; text-decoration: none; }
h1, h2 { margin: 0; font: inherit; }
svg { display: block; flex: none; fill: none; overflow: visible; stroke-width: 3; }
.drawing { stroke-width: 1; }
.defs { position: absolute; width: 0; height: 0; }
.i { width: 20px; height: 20px; }
.I { width: 40px; height: 40px; }

.fw { fill: #d9d9d9; }
.fW { fill: #f5f5f5; }
.fg { fill: #b8b8b8; }
.fg2 { fill: #6b717b; }
.fb { fill: #7fc4fa; }
.fbd { fill: #42658a; }
.fy { fill: #fccd72; }
.fr { fill: #f26363; }
.ft { fill: #67d6e0; }
.sw { stroke: #d0d2d5; }
.sW { stroke: #f5f5f5; }
.sb { stroke: #67b6f0; }
.sy { stroke: #fccd72; }
.lockopen { stroke: none; }
.open { fill: none; stroke: #fccd72; stroke-width: 6; }

.caret {
  flex: none;
  width: 6px;
  height: 4px;
  background: #dcdcdc;
  clip-path: polygon(0 0, 100% 0, 50% 100%);
}
.caret.l { width: 10px; height: 5px; }
.caret.m { width: 10px; height: 8px; }
.caret.dim { background: #8b8f95; }
.caret.side { width: 5px; height: 10px; clip-path: polygon(0 0, 100% 50%, 0 100%); }
.caret.up { width: 8px; height: 6px; background: #55575a; clip-path: polygon(50% 0, 100% 100%, 0 100%); }

.window {
  display: flex;
  flex-direction: column;
  min-height: 100vh;
  border: 1px solid #0a8fd8;
}

/* Title bar */
.titlebar { display: flex; align-items: center; height: 38px; padding: 0 10px 4px 3px; }
.quick, .account { display: flex; align-items: center; }
.quick { gap: 10px; margin-left: 11px; }
.quick .custom { margin-left: 1px; }
.quick .caret.dim { margin-right: -2px; }
.quick .share { gap: 5px; color: #90ccf5; }
.doc { display: flex; flex: 1; justify-content: center; gap: 20px; white-space: nowrap; }
.search {
  width: 223px;
  height: 26px;
  margin: 0 5px 0 9px;
  padding: 0 4px;
  border: 0;
  background: #464f61;
  font-size: 13px;
  font-style: italic;
}
.search::placeholder { color: #b6bac1; opacity: 1; }
.account { gap: 10px; }
.account .user { gap: 7px; margin-right: 20px; }
.account .cart { margin-left: 4px; }
.rule { width: 1px; height: 22px; margin: 0 0 0 2px; background: #4a515c; }
.winbtns { display: flex; gap: 14px; margin-left: 86px; }

/* Ribbon tabs */
.tabs { display: flex; align-items: center; height: 25px; padding-left: 7px; color: #b4b6b9; white-space: nowrap; }
.tabs a { padding: 3px 13px 2px 12px; }
.tabs a.on { background: #3b4453; color: #ececec; }
.collapse { width: 19px; height: 9px; margin: 0 6px 0 24px; background: #eee; }
.collapse i { width: 6px; height: 4px; background: #444; clip-path: polygon(50% 0, 100% 100%, 0 100%); }

/* Ribbon */
.ribbon {
  display: grid;
  grid-template-columns: 278fr 316fr 184fr 341fr 100fr 277fr 85fr 121fr 113fr 91fr;
  height: 124px;
  margin: 0 4px;
  background: #3b4453;
  white-space: nowrap;
}
.panel { display: flex; flex-direction: column; min-width: 0; padding-top: 5px; border-right: 1px solid #222933; }
.panel:last-child { border: 0; }
.body { display: grid; height: 93px; }
.panel h2 { position: relative; display: flex; align-items: center; justify-content: center; gap: 7px; height: 26px; padding-top: 4px; }
.launcher { position: absolute; right: 7px; top: 11px; }
.viewp h2 { justify-content: flex-start; padding-left: 6px; gap: 9px; }
.viewp .launcher { right: 17px; }
.big { display: flex; flex-direction: column; justify-content: flex-start; padding-top: 3px; line-height: 20px; }
.big .I { margin-bottom: 5px; }
.big .caret { margin-top: 4px; }
.smalls { display: grid; grid-template-rows: 31px 31px 31px; justify-items: start; }
.smalls button { gap: 7px; }
.smalls button > .caret { margin-left: 3px; }
.draw .body { grid-template-columns: 48px 58px 64px 50px 1fr; padding-left: 3px; }
.draw .smalls { padding-left: 5px; }
.modify .body { grid-template-columns: 91px 88px 95px 20px; padding-left: 6px; }
.modify .wide { width: 77px; }
.modify .wide > .caret { margin-left: auto; }
.annotation .body { grid-template-columns: 54px 76px 1fr; padding-left: 3px; }
.annotation .smalls { padding-left: 6px; }
.layers .body { grid-template-columns: 77px 1fr; padding-right: 3px; }
.stackcol { display: grid; grid-template-rows: 31px 31px 31px; align-items: center; }
.iconrow { display: flex; gap: 10px; padding-left: 4px; }
.field {
  display: flex;
  align-items: center;
  height: 28px;
  padding: 0 2px 0 8px;
  border: 1px solid #272e3a;
  background: #4d586b;
}
.layers .field { gap: 6px; padding-left: 7px; }
.field select { flex: 1; min-width: 0; padding: 0; border: 0; background: none; appearance: none; outline: 0; }
.swatch { flex: none; width: 18px; height: 18px; background: #fff; }
.props .swatch { width: 20px; height: 20px; margin-right: 5px; }
.line { width: 80px; height: 1px; margin-right: 3px; background: #fff; }
.block .body { grid-template-columns: 52px 1fr; }
.block .smalls { padding-left: 3px; }
.props .body { grid-template-columns: 78px 24px 1fr; padding-right: 3px; }
.props .smalls { padding-left: 1px; }
.groups .body { grid-template-columns: 51px 1fr; }
.groups .smalls { padding-left: 5px; }
.groups .active { width: 29px; height: 27px; align-self: center; margin-left: -5px; border: 1px solid #6fbcf5; background: #43607d; }
.utils .body { grid-template-columns: 88px 1fr; }
.utils .smalls { padding-left: 3px; }
.clip .body { grid-template-columns: 66px 1fr; }
.clip .smalls { padding-left: 3px; }
.viewp .body { grid-template-columns: 80px; }

/* Drawing tabs */
.filetabs, .layouts { display: flex; align-items: center; }
.filetabs { height: 38px; margin: 0 3px; padding: 2px 0 0 11px; border-bottom: 5px solid #3b4453; }
.slash { width: 10px; height: 20px; background: linear-gradient(116deg, transparent 47%, #596170 47%, #596170 54%, transparent 54%); }
.ft-start { margin: 0 9px 0 10px; }
.slant { display: flex; align-items: center; font-weight: 700; clip-path: polygon(12px 0, 100% 0, calc(100% - 12px) 100%, 0 100%); background: #3b4453; }
.file { gap: 10px; align-self: flex-end; height: 30px; padding: 0 14px 0 21px; }
.plus {
  width: 16px;
  height: 16px;
  background: linear-gradient(#ddd, #ddd) center / 100% 2px no-repeat, linear-gradient(#ddd, #ddd) center / 2px 100% no-repeat;
}
.filetabs .plus { margin: 0 13px 0 11px; }

/* Viewport */
.viewport { position: relative; flex: 1; background: #222830; overflow: hidden; }
.drawing { position: absolute; inset: 0; width: 100%; height: 100%; }
.vplabel { position: absolute; left: 8px; top: 5px; gap: 1px; font-family: "Noto Sans", sans-serif; }
.vpbtns { position: absolute; right: 13px; top: 8px; display: flex; gap: 9px; }
.cube { position: absolute; right: 19px; top: 70px; }
.wcs {
  position: absolute;
  right: 58px;
  top: 199px;
  width: 56px;
  height: 20px;
  gap: 6px;
  border-radius: 5px;
  background: #9a9caa;
  color: #6b6d77;
  font: 13px "Liberation Sans", sans-serif;
}
.navbar { position: absolute; right: 5px; top: 221px; }
.cmd {
  position: absolute;
  left: 21.7%;
  right: 21.7%;
  bottom: 0;
  display: flex;
  align-items: center;
  height: 34px;
  padding: 1px 0 1px 6px;
  background: #2a303c;
}
.cmd > button { margin-left: 8px; }
.cmd > button + button { margin: 0 6px 0 15px; }
.entry { display: flex; flex: 1; align-items: center; align-self: stretch; padding: 0 6px 0 5px; border-radius: 2px; background: #bbbdbf; color: #55575a; }
.entry .caret.l { margin-left: 2px; background: #55575a; }
.entry input { flex: 1; min-width: 0; padding: 0 8px; border: 0; background: none; outline: 0; font: italic 14px "DejaVu Sans Mono", monospace; }
.entry input::placeholder { color: #66686b; opacity: 1; }

/* Layout tabs */
.layouts { height: 42px; margin: 0 3px; padding-left: 10px; border-top: 5px solid #3b4453; align-items: flex-start; line-height: 32px; }
.layouts .model { height: 30px; margin-right: 10px; padding: 0 21px; }
.layouts .slash { margin: 5px 12px 0 11px; }
.layouts .plus { margin: 7px 0 0; }

/* Status bar */
.status { display: flex; gap: 3px; height: 36px; padding: 0 5px 6px; }
.fill { flex: 1; margin-right: 4px; background: #3b4453; }
.cell { display: flex; align-items: center; gap: 10px; padding: 0 5px; background: #3b4453; }
.w59, .w30, .w31, .w34 { justify-content: center; padding: 0; }
.w59 { width: 59px; }
.w80 { width: 80px; }
.w30 { width: 30px; }
.w31 { width: 31px; }
.w34 { width: 34px; }
.w50 { width: 50px; }
.w60 { width: 60px; }
.w130 { width: 129px; margin-right: -2px; padding: 0 4px; }
.w132 { width: 132px; gap: 5px; padding: 0 0 0 1px; }
.tight { gap: 6px; }
.spaced { margin-left: 6px; }
.w30 + .w130 { margin-left: -2px; }
.joined { margin-left: -2px; }
.lit { width: 28px; height: 28px; background: #5f8fc4; }
```
